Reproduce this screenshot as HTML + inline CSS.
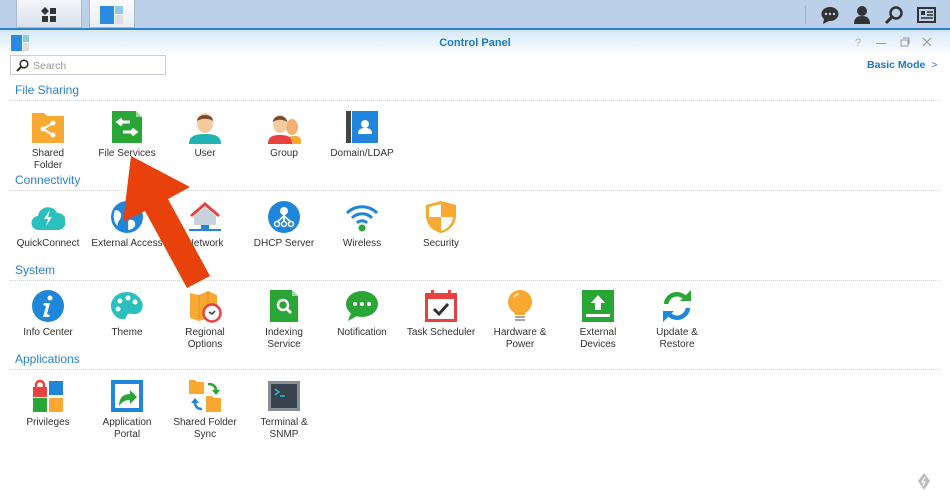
<!DOCTYPE html>
<html><head><meta charset="utf-8">
<style>
*{margin:0;padding:0;box-sizing:border-box}
body{width:950px;height:504px;overflow:hidden;background:#fff;font-family:"Liberation Sans",sans-serif;position:relative}
.top{position:absolute;left:0;top:0;width:950px;height:28px;background:#bdd0ea}
.topline{position:absolute;left:0;top:28px;width:950px;height:2px;background:#2b7fd6}
.tab{position:absolute;top:0;height:28px;background:linear-gradient(#f4f6f9,#d9e1ec);border:1px solid #a9b8cc;border-top:none}
.titlebar{position:absolute;left:0;top:30px;width:950px;height:26px;background:linear-gradient(#d6e8f8,#fff)}
.title{position:absolute;left:0;width:950px;top:37px;text-align:center;font-weight:bold;font-size:11px;color:#1a77d2}
.search{position:absolute;left:10px;top:55px;width:156px;height:20px;border:1px solid #ccd;background:#fff;font-size:10.5px;color:#999;padding:4px 0 0 22px}
.basic{position:absolute;left:867px;top:59px;font-size:10.5px;font-weight:bold;color:#1a77d2}
.sec{position:absolute;left:15px;font-size:12px;color:#2a80d8}
.dot{position:absolute;left:10px;width:930px;height:0;border-top:1px dotted #cfd6dd}
.it{position:absolute;width:80px;margin-left:-40px;text-align:center}
.it svg{display:block;margin:0 auto;width:34px;height:34px}
.it span{display:block;margin-top:4px;font-size:10px;line-height:12px;color:#333}
</style></head><body>
<div class="top"></div>
<div class="tab" style="left:16px;width:66px"></div>
<div class="tab" style="left:89px;width:46px;background:linear-gradient(#fafbfd,#e8eef6)"></div>
<svg style="position:absolute;left:40px;top:6px" width="18" height="18"><path d="M5 1l4 4-4 4-4-4z" fill="#333"/><rect x="10" y="2" width="6" height="6" fill="#333"/><rect x="2" y="10" width="6" height="6" fill="#333"/><rect x="10" y="10" width="6" height="6" fill="#333"/></svg>
<svg style="position:absolute;left:100px;top:5px" width="24" height="20"><rect x="0" y="1" width="14" height="18" fill="#2b8be0"/><rect x="15" y="1" width="8" height="8" fill="#8ccbe0"/><rect x="15" y="10" width="8" height="9" fill="#ddd"/></svg>
<div class="topline"></div>
<div style="position:absolute;left:805px;top:6px;width:1px;height:18px;background:#9eb2cc"></div>
<svg style="position:absolute;left:820px;top:5px" width="20" height="20"><ellipse cx="10" cy="9" rx="8.5" ry="7" fill="#333"/><path d="M4 14l-1 5 6-3z" fill="#333"/><circle cx="6" cy="9" r="1.2" fill="#bdd0ea"/><circle cx="10" cy="9" r="1.2" fill="#bdd0ea"/><circle cx="14" cy="9" r="1.2" fill="#bdd0ea"/></svg>
<svg style="position:absolute;left:852px;top:5px" width="20" height="20"><circle cx="10" cy="6" r="5" fill="#333"/><path d="M2 19c0-6 3-8 8-8s8 2 8 8z" fill="#333"/></svg>
<svg style="position:absolute;left:884px;top:5px" width="20" height="20"><circle cx="12" cy="8" r="5.5" fill="none" stroke="#333" stroke-width="2.5"/><path d="M8 12l-6 6" stroke="#333" stroke-width="3"/></svg>
<svg style="position:absolute;left:917px;top:6px" width="20" height="18"><rect x="1" y="2" width="17" height="14" fill="none" stroke="#333" stroke-width="2"/><rect x="4" y="5" width="4" height="4" fill="#333"/><path d="M10 6h6M10 9h6M4 12h12" stroke="#333" stroke-width="1.5"/></svg>
<div class="titlebar"></div>
<svg style="position:absolute;left:11px;top:35px" width="20" height="16"><rect x="0" y="0" width="11" height="16" fill="#2b8be0"/><rect x="12" y="0" width="6" height="7" fill="#8ccbe0"/><rect x="12" y="8" width="6" height="8" fill="#ddd"/></svg>
<div class="title">Control Panel</div>
<div style="position:absolute;left:855px;top:37px;font-size:11px;color:#aab">?</div>
<div style="position:absolute;left:876px;top:43px;width:10px;height:1px;background:#999"></div>
<svg style="position:absolute;left:900px;top:37px" width="10" height="10"><rect x="1" y="3" width="7" height="6" fill="none" stroke="#999"/><path d="M3 1h6v6" fill="none" stroke="#999"/></svg>
<svg style="position:absolute;left:922px;top:37px" width="10" height="10"><path d="M1 1l8 8M9 1l-8 8" stroke="#999" stroke-width="1.2"/></svg>
<div class="search">Search</div>
<svg style="position:absolute;left:16px;top:59px" width="13" height="13"><circle cx="8" cy="5" r="3.8" fill="none" stroke="#333" stroke-width="1.6"/><path d="M5 8l-4 4" stroke="#333" stroke-width="2"/></svg>
<div class="basic">Basic Mode <span style="font-weight:normal;margin-left:3px">&gt;</span></div>

<div class="sec" style="top:83px">File Sharing</div><div class="dot" style="top:100px"></div>
<div class="sec" style="top:173px">Connectivity</div><div class="dot" style="top:190px"></div>
<div class="sec" style="top:263px">System</div><div class="dot" style="top:280px"></div>
<div class="sec" style="top:352px">Applications</div><div class="dot" style="top:369px"></div>

<div class="it" style="left:48px;top:110px"><svg viewBox="0 0 34 34"><path d="M1 3h12l3 3h17v27H1z" fill="#f9a832"/><circle cx="22" cy="13" r="2.5" fill="#fff"/><circle cx="12" cy="19" r="2.5" fill="#fff"/><circle cx="22" cy="25" r="2.5" fill="#fff"/><path d="M22 13L12 19l10 6" stroke="#fff" stroke-width="2" fill="none"/></svg><span>Shared<br>Folder</span></div>
<div class="it" style="left:127px;top:110px"><svg viewBox="0 0 34 34"><path d="M2 1h24l6 6v26H2z" fill="#2aa637"/><path d="M26 1v6h6" fill="#9dd99f"/><path d="M20 12H9M12 9l-4 3 4 3M13 22h12M22 19l4 3-4 3" stroke="#fff" stroke-width="3" fill="none"/></svg><span>File Services</span></div>
<div class="it" style="left:205px;top:110px"><svg viewBox="0 0 34 34"><path d="M1 34c0-8 6-10 16-10s16 2 16 10z" fill="#1fb3b3"/><ellipse cx="17" cy="13" rx="8" ry="10" fill="#f7c9a0"/><path d="M9 11c0-8 16-8 16 0-4-3-12-3-16 0z" fill="#7a4a2a"/></svg><span>User</span></div>
<div class="it" style="left:284px;top:110px"><svg viewBox="0 0 34 34"><ellipse cx="25" cy="17" rx="6" ry="8" fill="#f0b070"/><path d="M18 34c0-6 4-8 10-8s6 3 6 8z" fill="#f9a832"/><path d="M1 34c0-7 4-9 12-9s12 2 12 9z" fill="#e94040"/><ellipse cx="13" cy="14" rx="7" ry="9" fill="#f7c9a0"/><path d="M6 12c0-8 14-8 14 0-4-3-10-3-14 0z" fill="#7a4a2a"/></svg><span>Group</span></div>
<div class="it" style="left:362px;top:110px"><svg viewBox="0 0 34 34"><rect x="1" y="1" width="5" height="32" fill="#444"/><rect x="7" y="1" width="26" height="32" fill="#1f86dc"/><circle cx="20" cy="14" r="4" fill="#fff"/><path d="M13 24c0-5 3-6 7-6s7 1 7 6z" fill="#fff"/></svg><span>Domain/LDAP</span></div>

<div class="it" style="left:48px;top:200px"><svg viewBox="0 0 34 34"><path d="M8 30a7 7 0 0 1-1-14 10 10 0 0 1 19-3 8 8 0 0 1 1 17z" fill="#2bc0bd"/><path d="M19 10l-6 9h4l-2 7 6-9h-4z" fill="#fff"/></svg><span>QuickConnect</span></div>
<div class="it" style="left:127px;top:200px"><svg viewBox="0 0 34 34"><circle cx="17" cy="17" r="16" fill="#1f86dc"/><path d="M5 10c4 0 7 3 6 7s-4 4-3 9c-3-2-6-7-3-16zM17 6c4 2 8 4 7 8-2 2-5 0-7-3zM19 20c4-1 7 1 6 6-2 3-5 4-7 4 1-3-1-7 1-10z" fill="#fff"/></svg><span>External Access</span></div>
<div class="it" style="left:205px;top:200px"><svg viewBox="0 0 34 34"><path d="M17 2L2 15l2 2L17 6l13 11 2-2z" fill="#e94040"/><path d="M6 16l11-9 11 9v9H6z" fill="#c8d2dc"/><rect x="13" y="25" width="8" height="5" fill="#1f86dc"/><path d="M1 30h32" stroke="#1f86dc" stroke-width="2"/></svg><span>Network</span></div>
<div class="it" style="left:284px;top:200px"><svg viewBox="0 0 34 34"><circle cx="17" cy="17" r="16" fill="#1f86dc"/><circle cx="17" cy="11" r="4" fill="#fff"/><path d="M17 14v8M17 16l-7 6M17 16l7 6" stroke="#fff" stroke-width="1.8"/><circle cx="10" cy="24" r="2.5" fill="none" stroke="#fff" stroke-width="1.5"/><circle cx="17" cy="24" r="2.5" fill="none" stroke="#fff" stroke-width="1.5"/><circle cx="24" cy="24" r="2.5" fill="none" stroke="#fff" stroke-width="1.5"/></svg><span>DHCP Server</span></div>
<div class="it" style="left:362px;top:200px"><svg viewBox="0 0 34 34"><path d="M2 13a21 21 0 0 1 30 0M7 18a14 14 0 0 1 20 0M12 23a7 7 0 0 1 10 0" stroke="#1f86dc" stroke-width="3" fill="none"/><circle cx="17" cy="28" r="3.5" fill="#2aa637"/></svg><span>Wireless</span></div>
<div class="it" style="left:441px;top:200px"><svg viewBox="0 0 34 34"><path d="M17 1l15 4v10c0 10-7 16-15 18C9 31 2 25 2 15V5z" fill="#f9a832"/><path d="M17 4v13H5V7zM17 17h12c-1 8-6 12-12 14z" fill="#fff"/></svg><span>Security</span></div>

<div class="it" style="left:48px;top:289px"><svg viewBox="0 0 34 34"><circle cx="17" cy="17" r="16" fill="#1f86dc"/><circle cx="19" cy="9" r="2.5" fill="#fff"/><path d="M13 14h6l-3 11 3 1-1 2h-6l3-11-3-1z" fill="#fff"/></svg><span>Info Center</span></div>
<div class="it" style="left:127px;top:289px"><svg viewBox="0 0 34 34"><path d="M17 3C7 3 1 10 1 17s6 14 13 13c3 0 2-4 4-5s8 2 12-2 3-8 1-12C28 6 23 3 17 3z" fill="#2bc0bd"/><circle cx="10" cy="12" r="2.5" fill="#fff"/><circle cx="18" cy="9" r="2.5" fill="#fff"/><circle cx="25" cy="13" r="2.5" fill="#fff"/><circle cx="8" cy="20" r="2.5" fill="#fff"/></svg><span>Theme</span></div>
<div class="it" style="left:205px;top:289px"><svg viewBox="0 0 34 34"><path d="M2 4l9 2 9-4 9 4v26l-9-3-9 3-9-3z" fill="#f9a832"/><path d="M11 6v24M20 2v24" stroke="#e59120" stroke-width="1"/><circle cx="24" cy="24" r="8.5" fill="#fff" stroke="#e94040" stroke-width="2.5"/><path d="M21 23l3 2 3-3" stroke="#333" stroke-width="1.5" fill="none"/></svg><span>Regional<br>Options</span></div>
<div class="it" style="left:284px;top:289px"><svg viewBox="0 0 34 34"><path d="M3 1h22l6 6v26H3z" fill="#2aa637"/><path d="M25 1v6h6" fill="#9dd99f"/><circle cx="16" cy="16" r="5" fill="none" stroke="#fff" stroke-width="2.5"/><path d="M19 19l5 5" stroke="#fff" stroke-width="3"/></svg><span>Indexing<br>Service</span></div>
<div class="it" style="left:362px;top:289px"><svg viewBox="0 0 34 34"><ellipse cx="17" cy="15" rx="16" ry="13" fill="#2aa637"/><path d="M6 24l-3 8 9-5z" fill="#2aa637"/><circle cx="10" cy="15" r="2" fill="#fff"/><circle cx="17" cy="15" r="2" fill="#fff"/><circle cx="24" cy="15" r="2" fill="#fff"/></svg><span>Notification</span></div>
<div class="it" style="left:441px;top:289px"><svg viewBox="0 0 34 34"><rect x="1" y="4" width="32" height="29" fill="#e94040"/><rect x="4" y="10" width="26" height="20" fill="#fff"/><rect x="7" y="1" width="3" height="6" fill="#e94040"/><rect x="24" y="1" width="3" height="6" fill="#e94040"/><path d="M10 20l5 5 9-10" stroke="#333" stroke-width="3" fill="none"/></svg><span>Task Scheduler</span></div>
<div class="it" style="left:520px;top:289px"><svg viewBox="0 0 34 34"><circle cx="17" cy="13" r="12" fill="#f9a832"/><path d="M10 20h14l-2 6H12z" fill="#f9a832"/><path d="M12 28h10M12 31h10" stroke="#888" stroke-width="1.5"/><path d="M11 8a7 7 0 0 1 5-3" stroke="#fde2a6" stroke-width="2" fill="none"/></svg><span>Hardware &amp;<br>Power</span></div>
<div class="it" style="left:598px;top:289px"><svg viewBox="0 0 34 34"><rect x="1" y="1" width="32" height="32" fill="#2aa637"/><path d="M17 6l-7 8h4v7h6v-7h4z" fill="#fff"/><rect x="5" y="25" width="24" height="3" fill="#fff"/></svg><span>External<br>Devices</span></div>
<div class="it" style="left:677px;top:289px"><svg viewBox="0 0 34 34"><path d="M6 15a11 11 0 0 1 20-5" stroke="#2aa637" stroke-width="4.5" fill="none"/><path d="M20 12h11V1z" fill="#2aa637"/><path d="M28 19a11 11 0 0 1-20 5" stroke="#1f86dc" stroke-width="4.5" fill="none"/><path d="M14 22H3v11z" fill="#1f86dc"/></svg><span>Update &amp;<br>Restore</span></div>

<div class="it" style="left:48px;top:379px"><svg viewBox="0 0 34 34"><rect x="2" y="8" width="14" height="10" fill="#e94040"/><path d="M5 9V6a4 4 0 0 1 8 0v3" stroke="#e94040" stroke-width="2.5" fill="none"/><rect x="18" y="2" width="14" height="14" fill="#1f86dc"/><rect x="2" y="19" width="14" height="14" fill="#2aa637"/><rect x="18" y="19" width="14" height="14" fill="#f9a832"/></svg><span>Privileges</span></div>
<div class="it" style="left:127px;top:379px"><svg viewBox="0 0 34 34"><rect x="1" y="1" width="32" height="32" fill="#1f86dc"/><rect x="5" y="5" width="24" height="24" fill="#fff"/><path d="M9 27c0-8 4-12 11-12v-4l7 7-7 7v-4c-5 0-8 2-11 6z" fill="#2aa637"/></svg><span>Application<br>Portal</span></div>
<div class="it" style="left:205px;top:379px"><svg viewBox="0 0 34 34"><path d="M1 1h6l2 2h7v12H1z" fill="#f9a832"/><path d="M18 17h6l2 2h7v14H18z" fill="#f9a832"/><path d="M20 5c6 0 8 3 8 7" stroke="#2aa637" stroke-width="2.5" fill="none"/><path d="M24 11h8l-4 5z" fill="#2aa637"/><path d="M14 30c-5 0-7-3-7-7" stroke="#1f86dc" stroke-width="2.5" fill="none"/><path d="M3 24h8l-4-5z" fill="#1f86dc"/></svg><span>Shared Folder<br>Sync</span></div>
<div class="it" style="left:284px;top:379px"><svg viewBox="0 0 34 34"><rect x="1" y="2" width="32" height="30" fill="#8a8f95"/><rect x="4" y="5" width="26" height="24" fill="#38434d"/><path d="M8 10l4 3-4 3M13 17h5" stroke="#2bc0bd" stroke-width="1.5" fill="none"/></svg><span>Terminal &amp;<br>SNMP</span></div>

<svg style="position:absolute;left:917px;top:472px" width="14" height="20"><path d="M7 1l6 8-6 9-6-9z" fill="#bbb"/><path d="M8 5l-3 5h3l-2 4" stroke="#fff" stroke-width="1.2" fill="none"/></svg>

<svg style="position:absolute;left:0;top:0" width="950" height="504"><polygon points="131,156 190,187 168,199 210,276 187,288 145,211 123,222" fill="#e8410c"/></svg>
</body></html>
